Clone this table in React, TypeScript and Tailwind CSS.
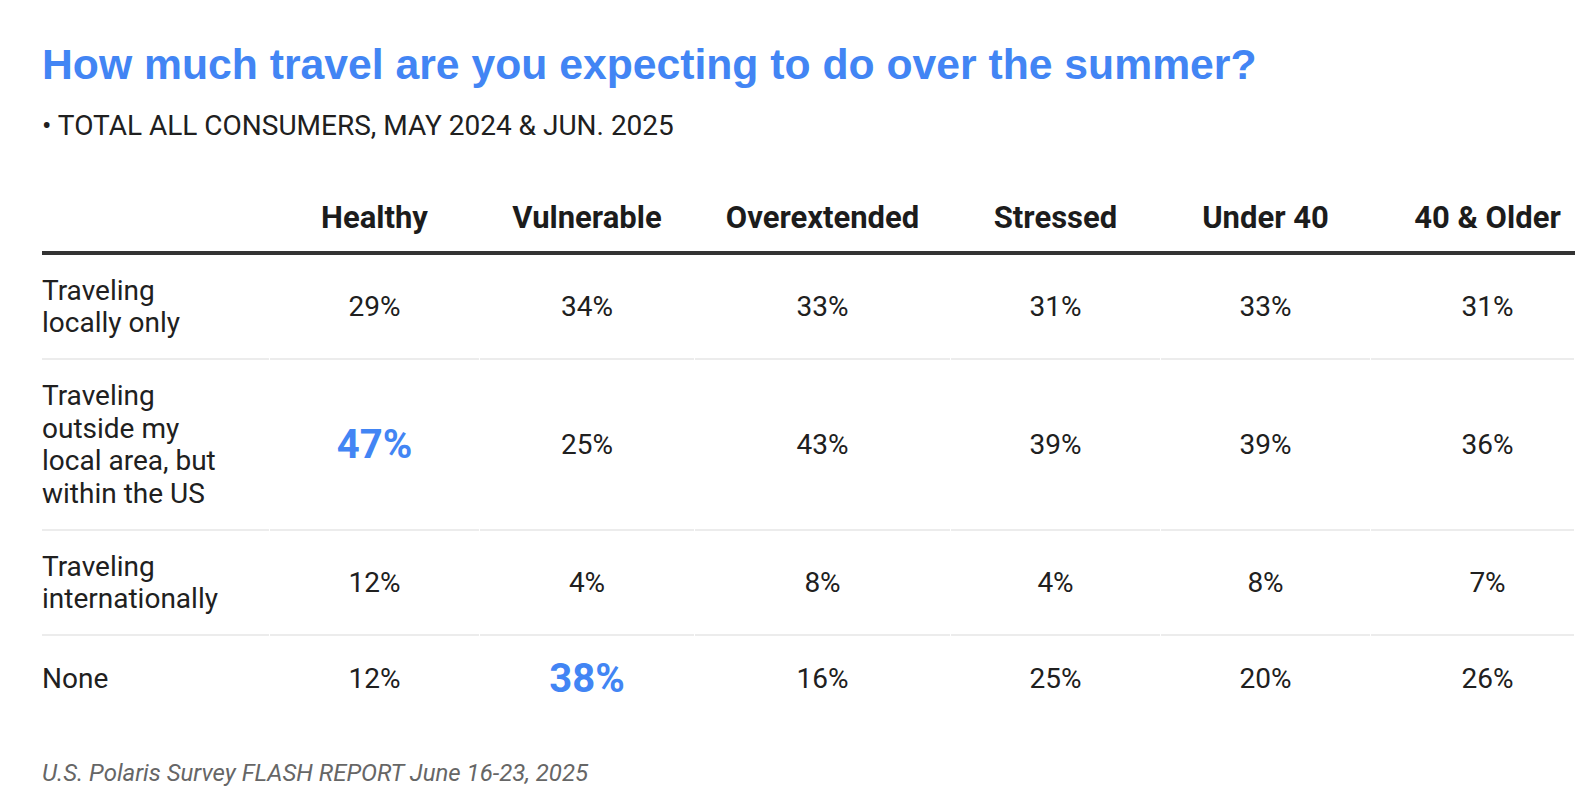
import React from 'react';

// Survey table: summer travel expectations by consumer segment
type Row = {
  label: string;
  values: string[];
  // index of the value shown as the highlighted figure, if any
  highlight?: number;
};

const columns = ['Healthy', 'Vulnerable', 'Overextended', 'Stressed', 'Under 40', '40 & Older'];

const rows: Row[] = [
  { label: 'Traveling locally only', values: ['29%', '34%', '33%', '31%', '33%', '31%'] },
  {
    label: 'Traveling outside my local area, but within the US',
    values: ['47%', '25%', '43%', '39%', '39%', '36%'],
    highlight: 0,
  },
  { label: 'Traveling internationally', values: ['12%', '4%', '8%', '4%', '8%', '7%'] },
  { label: 'None', values: ['12%', '38%', '16%', '25%', '20%', '26%'], highlight: 1 },
];

const gridCols = 'grid grid-cols-[227px_209px_214px_255px_209px_209px_203px] gap-x-px';

export default function App() {
  return (
    <div className="min-h-screen bg-white pl-[42px] pt-[43px] text-[#202020] font-['Roboto',sans-serif]">
      <h1 className="text-[42.7px] leading-none font-bold text-[#4285f4] font-['Liberation_Sans',Arial,sans-serif]">
        How much travel are you expecting to do over the summer?
      </h1>
      <p className="mt-[26px] text-[28px] leading-none">• TOTAL ALL CONSUMERS, MAY 2024 &amp; JUN. 2025</p>

      <div className="mt-[59px] w-[1533px]">
        {/* header */}
        <div className={`${gridCols} border-b-4 border-[#333333] pb-[15px]`}>
          <div />
          {columns.map((c, i) => (
            <div
              key={c}
              className={`text-center text-[31px] leading-[1.2] font-bold text-[#1c1c1c] ${i === columns.length - 1 ? 'pl-[30px]' : ''}`}
            >
              {c}
            </div>
          ))}
        </div>

        {/* body */}
        {rows.map((row, ri) => {
          const last = ri === rows.length - 1;
          const cellBorder = last ? 'pt-[27px] pb-[18px]' : 'pt-[20px] pb-[18.5px] border-b-2 border-[#ececec]';
          return (
            <div key={row.label} className={gridCols}>
              <div className={`pr-[45px] text-[28px] leading-[32.5px] ${cellBorder}`}>{row.label}</div>
              {row.values.map((v, vi) => (
                <div
                  key={vi}
                  className={`flex items-center justify-center ${cellBorder} ${vi === row.values.length - 1 ? 'pl-[30px]' : ''}`}
                >
                  {row.highlight === vi ? (
                    <span className="text-[40px] leading-[32.5px] font-bold text-[#4285f4]">{v}</span>
                  ) : (
                    <span className="text-[28px] leading-[32.5px]">{v}</span>
                  )}
                </div>
              ))}
            </div>
          );
        })}
      </div>

      <p className="mt-[47px] text-[24px] leading-none italic text-[#666666]">
        U.S. Polaris Survey FLASH REPORT June 16-23, 2025
      </p>
    </div>
  );
}
